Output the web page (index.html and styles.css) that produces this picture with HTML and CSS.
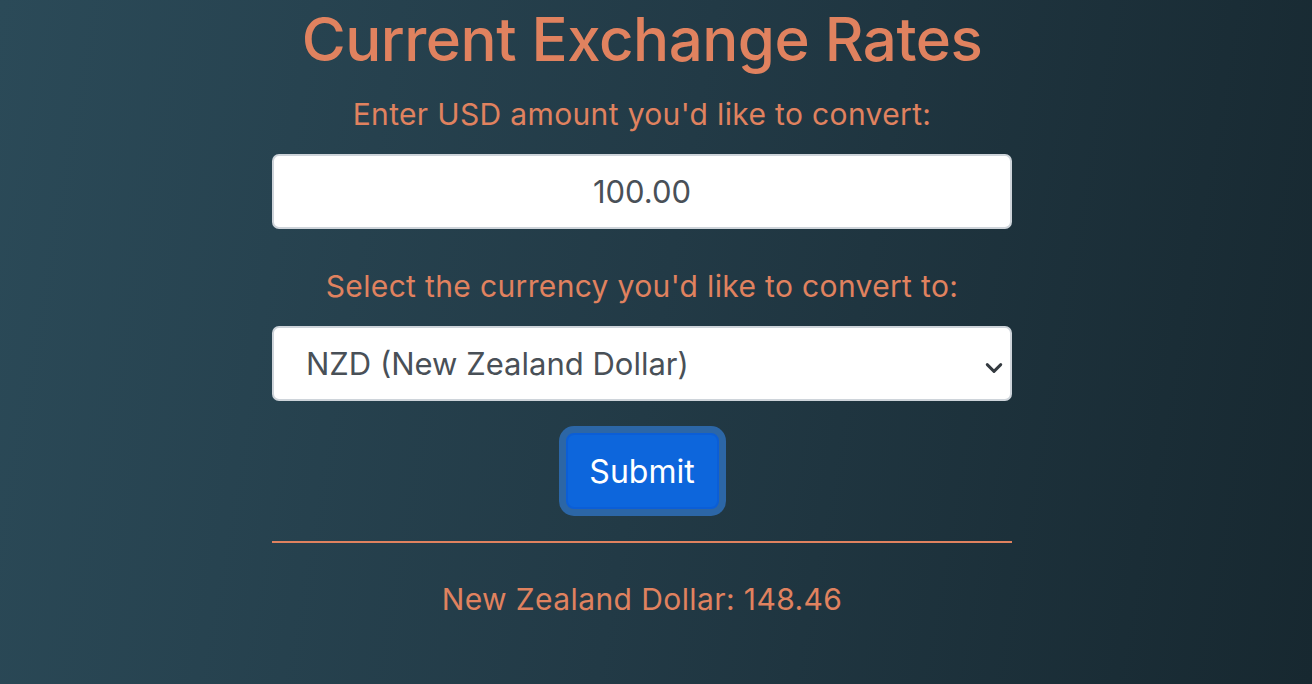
FILE: index.html
```html
<!DOCTYPE html>
<html lang="en">
<head>
<meta charset="utf-8">
<title>Current Exchange Rates</title>
<link rel="stylesheet" href="styles.css">
</head>
<body>
<main class="page">
  <div class="container">
    <h1 class="title">Current Exchange Rates</h1>
    <form class="form">
      <label class="label" for="amount">Enter USD amount you'd like to convert:</label>
      <input class="field field-input" id="amount" type="text" value="100.00">
      <label class="label label-second" for="currency">Select the currency you'd like to convert to:</label>
      <div class="select-wrap">
        <select class="field field-select" id="currency">
          <option>NZD (New Zealand Dollar)</option>
        </select>
        <svg class="chevron" viewBox="0 0 16 16" width="16" height="16" aria-hidden="true"><path d="M2 5l6 6 6-6" fill="none" stroke="#343a40" stroke-width="2.6" stroke-linecap="round" stroke-linejoin="round"/></svg>
      </div>
      <div class="actions">
        <button class="btn" type="button">Submit</button>
      </div>
    </form>
    <hr class="rule">
    <p class="result">New Zealand Dollar: 148.46</p>
  </div>
</main>
</body>
</html>
```
FILE: styles.css
```css
* { box-sizing: border-box; }
html, body { margin: 0; height: 100%; }
body {
  font-family: Inter, "Noto Sans", "Liberation Sans", sans-serif;
  background: linear-gradient(100deg, #2b4a58 0%, #223a46 50%, #172830 100%);
  color: #e0825f;
  overflow: hidden;
}
.page {
  display: flex;
  justify-content: center;
  padding-right: 28px;
}
.container {
  width: 740px;
  display: flex;
  flex-direction: column;
  align-items: center;
}
.title {
  margin: 0;
  margin-top: 3px;
  font-size: 60px;
  font-weight: 500;
  line-height: 72px;
  color: #e0825f;
  letter-spacing: -0.5px;
}
.form {
  width: 100%;
  display: flex;
  flex-direction: column;
  align-items: center;
}
.label {
  margin-top: 21px;
  font-size: 30px;
  line-height: 36px;
  letter-spacing: 0.35px;
  color: #e0825f;
  font-weight: 400;
}
.label-second { margin-top: 39px; }
.field {
  width: 100%;
  height: 75px;
  margin-top: 22px;
  background: #fff;
  border: 2px solid #ced4da;
  border-radius: 7px;
  font-family: inherit;
  font-size: 31px;
  color: #495057;
}
.field-input { text-align: center; padding: 0 20px; }
.select-wrap { width: 100%; position: relative; }
.field-select {
  appearance: none;
  -webkit-appearance: none;
  padding: 0 60px 0 32px;
  display: block;
}
.chevron {
  position: absolute;
  right: 9px;
  top: 55px;
  width: 18px;
  height: 18px;
}
.actions { margin-top: 32px; }
.btn {
  display: block;
  width: 153px;
  height: 76px;
  border: 2px solid #0b5ed7;
  border-radius: 8px;
  background: #0d66dc;
  color: #fff;
  font-family: inherit;
  font-size: 32px;
  box-shadow: 0 0 0 7px #2c66a6;
}
.rule {
  width: 100%;
  margin: 32px 0 0;
  border: 0;
  height: 2px;
  background: #e0825f;
}
.result {
  margin: 38px 0 0;
  font-size: 30px;
  line-height: 36px;
  letter-spacing: 0.4px;
  color: #e0825f;
}
```
